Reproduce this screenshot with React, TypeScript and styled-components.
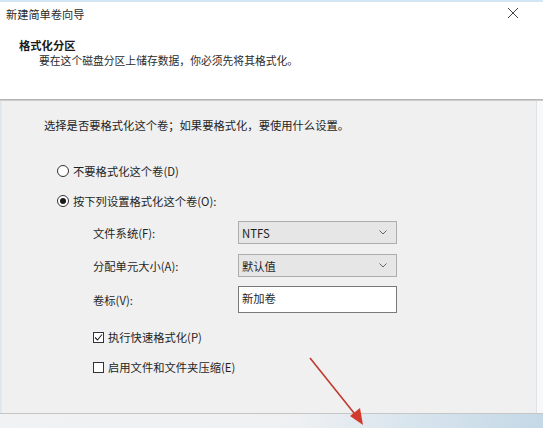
import React from 'react';
import styled, { createGlobalStyle } from 'styled-components';

const GlobalStyle = createGlobalStyle`
  html, body {
    margin: 0;
    padding: 0;
    background: #f0f0f0;
  }
  body {
    font-family: "Noto Sans CJK SC", "Microsoft YaHei", sans-serif;
    color: #1f1f1f;
  }
`;

const Window = styled.div`
  position: relative;
  width: 543px;
  height: 428px;
  display: flex;
  flex-direction: column;
  overflow: hidden;
  background: #f0f0f0;
  font-size: 11.3px;
`;

const TopEdge = styled.div`
  height: 2px;
  background: #d3e6f3;
`;

const TitleBar = styled.div`
  height: 24px;
  display: flex;
  align-items: center;
  justify-content: space-between;
  padding: 0 24px 0 6px;
  background: #ffffff;
`;

const TitleText = styled.span`
  font-size: 11.2px;
  color: #2a2a2a;
`;

const CloseIcon = styled.svg`
  width: 12px;
  height: 12px;
  margin-top: -2px;
`;

const Header = styled.div`
  height: 73px;
  background: #ffffff;
  padding: 12px 0 0 19px;
  box-sizing: border-box;
`;

const HeaderTitle = styled.div`
  font-weight: 700;
  font-size: 11.3px;
  line-height: 15px;
  color: #1a1a1a;
`;

const HeaderSub = styled.div`
  font-size: 10.8px;
  line-height: 15px;
  padding-left: 20px;
  color: #2b2b2b;
`;

const Divider = styled.div`
  height: 2px;
  background: linear-gradient(#a9a9a9, #d8d8d8);
`;

const Main = styled.div`
  flex: 1;
  display: flex;
`;

const Body = styled.div`
  flex: 1;
  display: flex;
  flex-direction: column;
  padding-left: 44px;
  border-left: 2px solid #dde8f0;
  box-sizing: border-box;
`;

const RightEdge = styled.div`
  width: 6px;
  background: #f7f8fa;
  border-left: 1px solid #e2e2e2;
`;

const Intro = styled.div`
  margin-top: 16px;
  line-height: 16px;
  margin-left: -2px;
`;

const Options = styled.div`
  margin-top: 30px;
  margin-left: 11px;
  display: flex;
  flex-direction: column;
  gap: 14px;
`;

const Choice = styled.label`
  display: flex;
  align-items: center;
  height: 16px;
  gap: 4px;
`;

const RadioDot = styled.span<{ $checked?: boolean }>`
  width: 10px;
  height: 10px;
  border: 1px solid #333;
  border-radius: 50%;
  background: #fff;
  display: flex;
  align-items: center;
  justify-content: center;

  &::after {
    content: '';
    width: 6px;
    height: 6px;
    border-radius: 50%;
    background: ${(p) => (p.$checked ? '#1a1a1a' : 'transparent')};
  }
`;

const Form = styled.div`
  display: grid;
  grid-template-columns: 145px 159px;
  row-gap: 10px;
  margin-left: 36px;
  margin-top: -2px;
  align-items: center;
`;

const FieldLabel = styled.span`
  line-height: 16px;
`;

const Select = styled.div`
  height: 23px;
  box-sizing: border-box;
  border: 1px solid #adadad;
  background: #e6e6e6;
  display: flex;
  align-items: center;
  justify-content: space-between;
  padding: 0 9px 0 3px;
  font-size: 11.3px;
`;

const Chevron = styled.svg`
  width: 8px;
  height: 5px;
`;

const TextBox = styled.div`
  height: 27px;
  margin-top: -1px;
  box-sizing: border-box;
  border: 1px solid #7a7a7a;
  background: #ffffff;
  padding: 3px 0 0 3px;
  line-height: 16px;
`;

const Checks = styled.div`
  display: flex;
  flex-direction: column;
  gap: 14px;
  margin-left: 36px;
  margin-top: 2px;
`;

const Box = styled.span`
  width: 11px;
  height: 11px;
  border: 1px solid #333;
  background: #fff;
  display: flex;
  align-items: center;
  justify-content: center;
  box-sizing: border-box;
`;

const Footer = styled.div`
  height: 14px;
  border-top: 1px solid #c6c6c6;
  background: linear-gradient(90deg, #f1f2f3 0%, #eef0f2 55%, #d9e5ee 75%, #c4d8e6 100%);
`;

const Arrow = styled.svg`
  position: absolute;
  left: 300px;
  top: 350px;
  width: 70px;
  height: 78px;
  pointer-events: none;
`;

function DropDown({ value }: { value: string }) {
  return (
    <Select>
      <span>{value}</span>
      <Chevron viewBox="0 0 8 5">
        <path d="M0.5 0.5 L4 4 L7.5 0.5" stroke="#666" strokeWidth="1" fill="none" />
      </Chevron>
    </Select>
  );
}

export default function App() {
  return (
    <>
      <GlobalStyle />
      <Window>
        <TopEdge />
        <TitleBar>
          <TitleText>新建简单卷向导</TitleText>
          <CloseIcon viewBox="0 0 12 12">
            <path d="M1 1 L11 11 M11 1 L1 11" stroke="#444" strokeWidth="1" fill="none" />
          </CloseIcon>
        </TitleBar>
        <Header>
          <HeaderTitle>格式化分区</HeaderTitle>
          <HeaderSub>要在这个磁盘分区上储存数据，你必须先将其格式化。</HeaderSub>
        </Header>
        <Divider />
        <Main>
          <Body>
            <Intro>选择是否要格式化这个卷；如果要格式化，要使用什么设置。</Intro>
            <Options>
              <Choice>
                <RadioDot />
                不要格式化这个卷(D)
              </Choice>
              <Choice>
                <RadioDot $checked />
                按下列设置格式化这个卷(O):
              </Choice>
              <Form>
                <FieldLabel>文件系统(F):</FieldLabel>
                <DropDown value="NTFS" />
                <FieldLabel>分配单元大小(A):</FieldLabel>
                <DropDown value="默认值" />
                <FieldLabel>卷标(V):</FieldLabel>
                <TextBox>新加卷</TextBox>
              </Form>
              <Checks>
                <Choice>
                  <Box>
                    <svg width="9" height="9" viewBox="0 0 9 9">
                      <path d="M1 4.5 L3.5 7 L8 1.5" stroke="#222" strokeWidth="1.1" fill="none" />
                    </svg>
                  </Box>
                  执行快速格式化(P)
                </Choice>
                <Choice>
                  <Box />
                  启用文件和文件夹压缩(E)
                </Choice>
              </Checks>
            </Options>
          </Body>
          <RightEdge />
        </Main>
        <Footer />
        {/* red pointer drawn over the lower edge */}
        <Arrow viewBox="0 0 70 78">
          <line x1="10" y1="8" x2="58" y2="68" stroke="#c0392b" strokeWidth="1.6" />
          <polygon points="63,75 50,66 60,58" fill="#d33a2c" />
        </Arrow>
      </Window>
    </>
  );
}
